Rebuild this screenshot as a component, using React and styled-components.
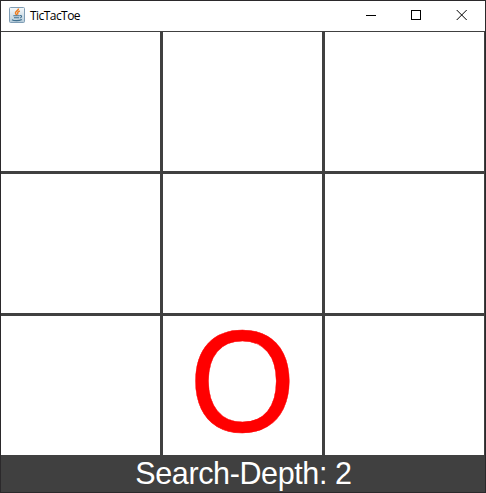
import React from "react";
import styled, { createGlobalStyle } from "styled-components";

const GlobalStyle = createGlobalStyle`
  * { box-sizing: border-box; }
  body { margin: 0; background: #242224; overflow: hidden; }
`;

const Window = styled.div`
  width: 486px;
  height: 493px;
  border: 1px solid #2b292b;
  display: flex;
  flex-direction: column;
  background: #404040;
`;

const TitleBar = styled.header`
  height: 31px;
  flex: none;
  display: flex;
  align-items: stretch;
  background: #fff;
  border-bottom: 1px solid #404040;
`;

const AppIcon = styled.svg`
  width: 16px;
  height: 16px;
  margin: 6px 5px 0 8px;
`;

const Title = styled.div`
  flex: 1;
  font: 12px/29px "Open Sans", "Noto Sans", sans-serif;
  letter-spacing: -0.55px;
  color: #000;
`;

const ControlButton = styled.button`
  width: 45px;
  padding: 0 0 2px;
  border: 0;
  background: transparent;
  display: flex;
  align-items: center;
  justify-content: center;
`;

const Controls = styled.div`
  display: flex;
  margin-right: 2px;
`;

const Board = styled.main`
  display: grid;
  grid-template-columns: repeat(3, 159px);
  grid-template-rows: repeat(3, 139px);
  gap: 3px;
`;

const Cell = styled.div`
  display: flex;
  justify-content: center;
  background: #fff;
`;

const Mark = styled.span`
  font: 145px/132px "Liberation Sans", Arial, sans-serif;
  height: 132px;
  color: #ff0000;
  -webkit-text-stroke: 0.4px #ff0000;
  transform: scaleX(0.947);
`;

const StatusBar = styled.footer`
  flex: 1;
  padding-left: 1px;
  font: 30.5px/37px "Liberation Sans", Arial, sans-serif;
  letter-spacing: -0.38px;
  text-align: center;
  color: #fff;
`;

const board = ["", "", "", "", "", "", "", "O", ""];

function JavaIcon() {
  return (
    <AppIcon viewBox="0 0 16 16" fill="none">
      <defs>
        <linearGradient id="tile" x1="0" y1="0" x2="0" y2="1">
          <stop offset="0" stopColor="#f7fafb" />
          <stop offset="1" stopColor="#b5cbd9" />
        </linearGradient>
      </defs>
      <rect x=".5" y=".5" width="15" height="15" rx="1" fill="url(#tile)" stroke="#7f9db5" />
      <path d="M9.500 1.500C9.800 3.500 5.500 4.500 6.500 6.500L8 8.200M10.800 4C8.500 5 8.200 6 9 7.500" stroke="#ee7d20" strokeWidth="1.4" />
      <path d="M4.300 8.800H10.800M5 10.700H10M11 8.500C13.200 8.300 13 10.500 10.800 11M3 12.700C5 14 10 14 12.800 12.500" stroke="#41708f" strokeWidth="1.1" />
    </AppIcon>
  );
}

export default function App() {
  return (
    <>
      <GlobalStyle />
      <Window>
        <TitleBar>
          <JavaIcon />
          <Title>TicTacToe</Title>
          <Controls>
            <ControlButton aria-label="Minimize">
              <svg width="10" height="10" stroke="#000" shapeRendering="crispEdges"><path d="M0 5.500H10" /></svg>
            </ControlButton>
            <ControlButton aria-label="Maximize">
              <svg width="10" height="10" fill="none" stroke="#000" shapeRendering="crispEdges"><path d="M.5 .5H9.500V9.500H.5Z" /></svg>
            </ControlButton>
            <ControlButton aria-label="Close">
              <svg width="10" height="10" overflow="visible" stroke="#000"><path d="M.7 0L10.700 10M10.700 0L.7 10" /></svg>
            </ControlButton>
          </Controls>
        </TitleBar>
        <Board>
          {board.map((mark, i) => (
            <Cell key={i}>{mark && <Mark>{mark}</Mark>}</Cell>
          ))}
        </Board>
        <StatusBar>Search-Depth: 2</StatusBar>
      </Window>
    </>
  );
}
